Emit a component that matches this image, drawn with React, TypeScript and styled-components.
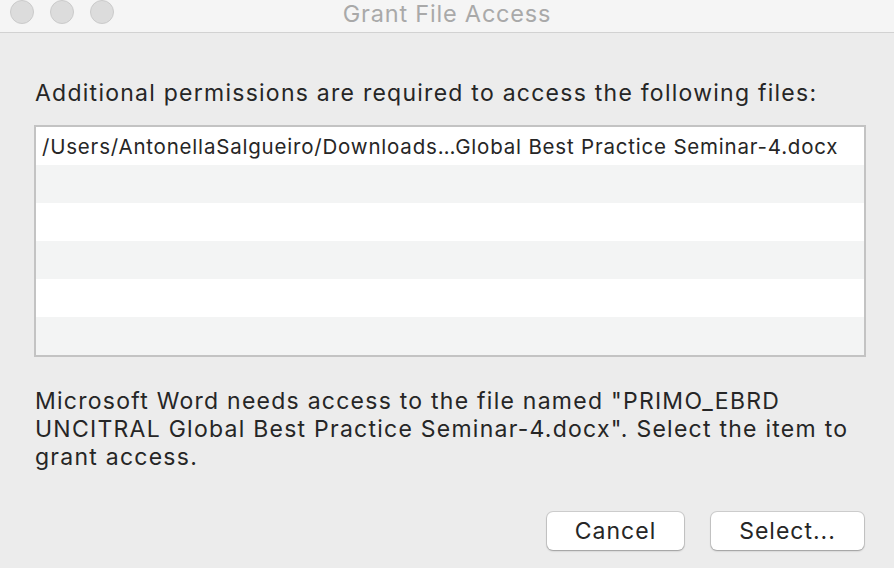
import React from "react";
import styled, { createGlobalStyle } from "styled-components";

// ============== Global =============
const GlobalStyle = createGlobalStyle`
  html, body {
    margin: 0;
    padding: 0;
    background: #ececec;
    font-family: Inter, "Noto Sans", "Liberation Sans", sans-serif;
    -webkit-font-smoothing: antialiased;
  }
  * { box-sizing: border-box; }
`;

// ============== Style Component =============
const Window = styled.div`
  width: 894px;
  height: 568px;
  background: #ececec;
  display: flex;
  flex-direction: column;
  overflow: hidden;
`;

const TitleBar = styled.header`
  height: 33px;
  background: #f5f5f5;
  border-bottom: 1px solid #d2d2d2;
  display: grid;
  grid-template-columns: 1fr auto 1fr;
  align-items: start;
  padding: 0 10px;
`;

const Lights = styled.div`
  display: flex;
  gap: 16px;
`;

const Light = styled.span`
  width: 24px;
  height: 24px;
  border-radius: 50%;
  background: #dcdcdc;
  border: 1px solid #cbcbcb;
`;

const Title = styled.h1`
  margin: 0;
  font-size: 23.5px;
  line-height: 27px;
  font-weight: 400;
  color: #a9a9a9;
  letter-spacing: 0.8px;
`;

const Body = styled.main`
  flex: 1;
  padding: 46px 28px 0 35px;
  display: flex;
  flex-direction: column;
`;

const Lead = styled.p`
  margin: 0;
  font-size: 23px;
  line-height: 28px;
  letter-spacing: 1.25px;
  color: #262626;
`;

const FileList = styled.ul`
  list-style: none;
  margin: 18px 0 0 -1px;
  padding: 0;
  width: 832px;
  border: 2px solid #c3c3c3;
  background: #fff;
`;

const FileRow = styled.li<{ $alt: boolean }>`
  height: 38px;
  padding: 0 6px;
  display: flex;
  align-items: center;
  font-size: 20.5px;
  letter-spacing: 0.8px;
  color: #262626;
  background: ${(p) => (p.$alt ? "#f3f4f4" : "#ffffff")};
  white-space: nowrap;
`;

const Message = styled(Lead)`
  margin-top: 30px;
  width: 830px;
`;

const Actions = styled.div`
  margin-top: 41px;
  display: flex;
  justify-content: flex-end;
  gap: 27px;
  padding-right: 2px;
`;

const Button = styled.button<{ $w: number }>`
  width: ${(p) => p.$w}px;
  height: 38px;
  background: #fff;
  border: none;
  border-radius: 6px;
  box-shadow: 0 0 0 1px rgba(0, 0, 0, 0.12), 0 1px 2px rgba(0, 0, 0, 0.25);
  font-family: inherit;
  font-size: 23px;
  letter-spacing: 1px;
  color: #262626;
  padding: 0;
`;

// ========================================

const rows = [
  "/Users/AntonellaSalgueiro/Downloads…Global Best Practice Seminar-4.docx",
  "",
  "",
  "",
  "",
  "",
];

export default function App() {
  return (
    <Window>
      <GlobalStyle />
      <TitleBar>
        <Lights>
          <Light />
          <Light />
          <Light />
        </Lights>
        <Title>Grant File Access</Title>
        <div />
      </TitleBar>
      <Body>
        <Lead>Additional permissions are required to access the following files:</Lead>
        <FileList>
          {rows.map((r, i) => (
            <FileRow key={i} $alt={i % 2 === 1}>
              {r}
            </FileRow>
          ))}
        </FileList>
        <Message>
          Microsoft Word needs access to the file named "PRIMO_EBRD UNCITRAL Global Best
          Practice Seminar-4.docx". Select the item to grant access.
        </Message>
        <Actions>
          <Button $w={137}>Cancel</Button>
          <Button $w={153}>Select...</Button>
        </Actions>
      </Body>
    </Window>
  );
}
